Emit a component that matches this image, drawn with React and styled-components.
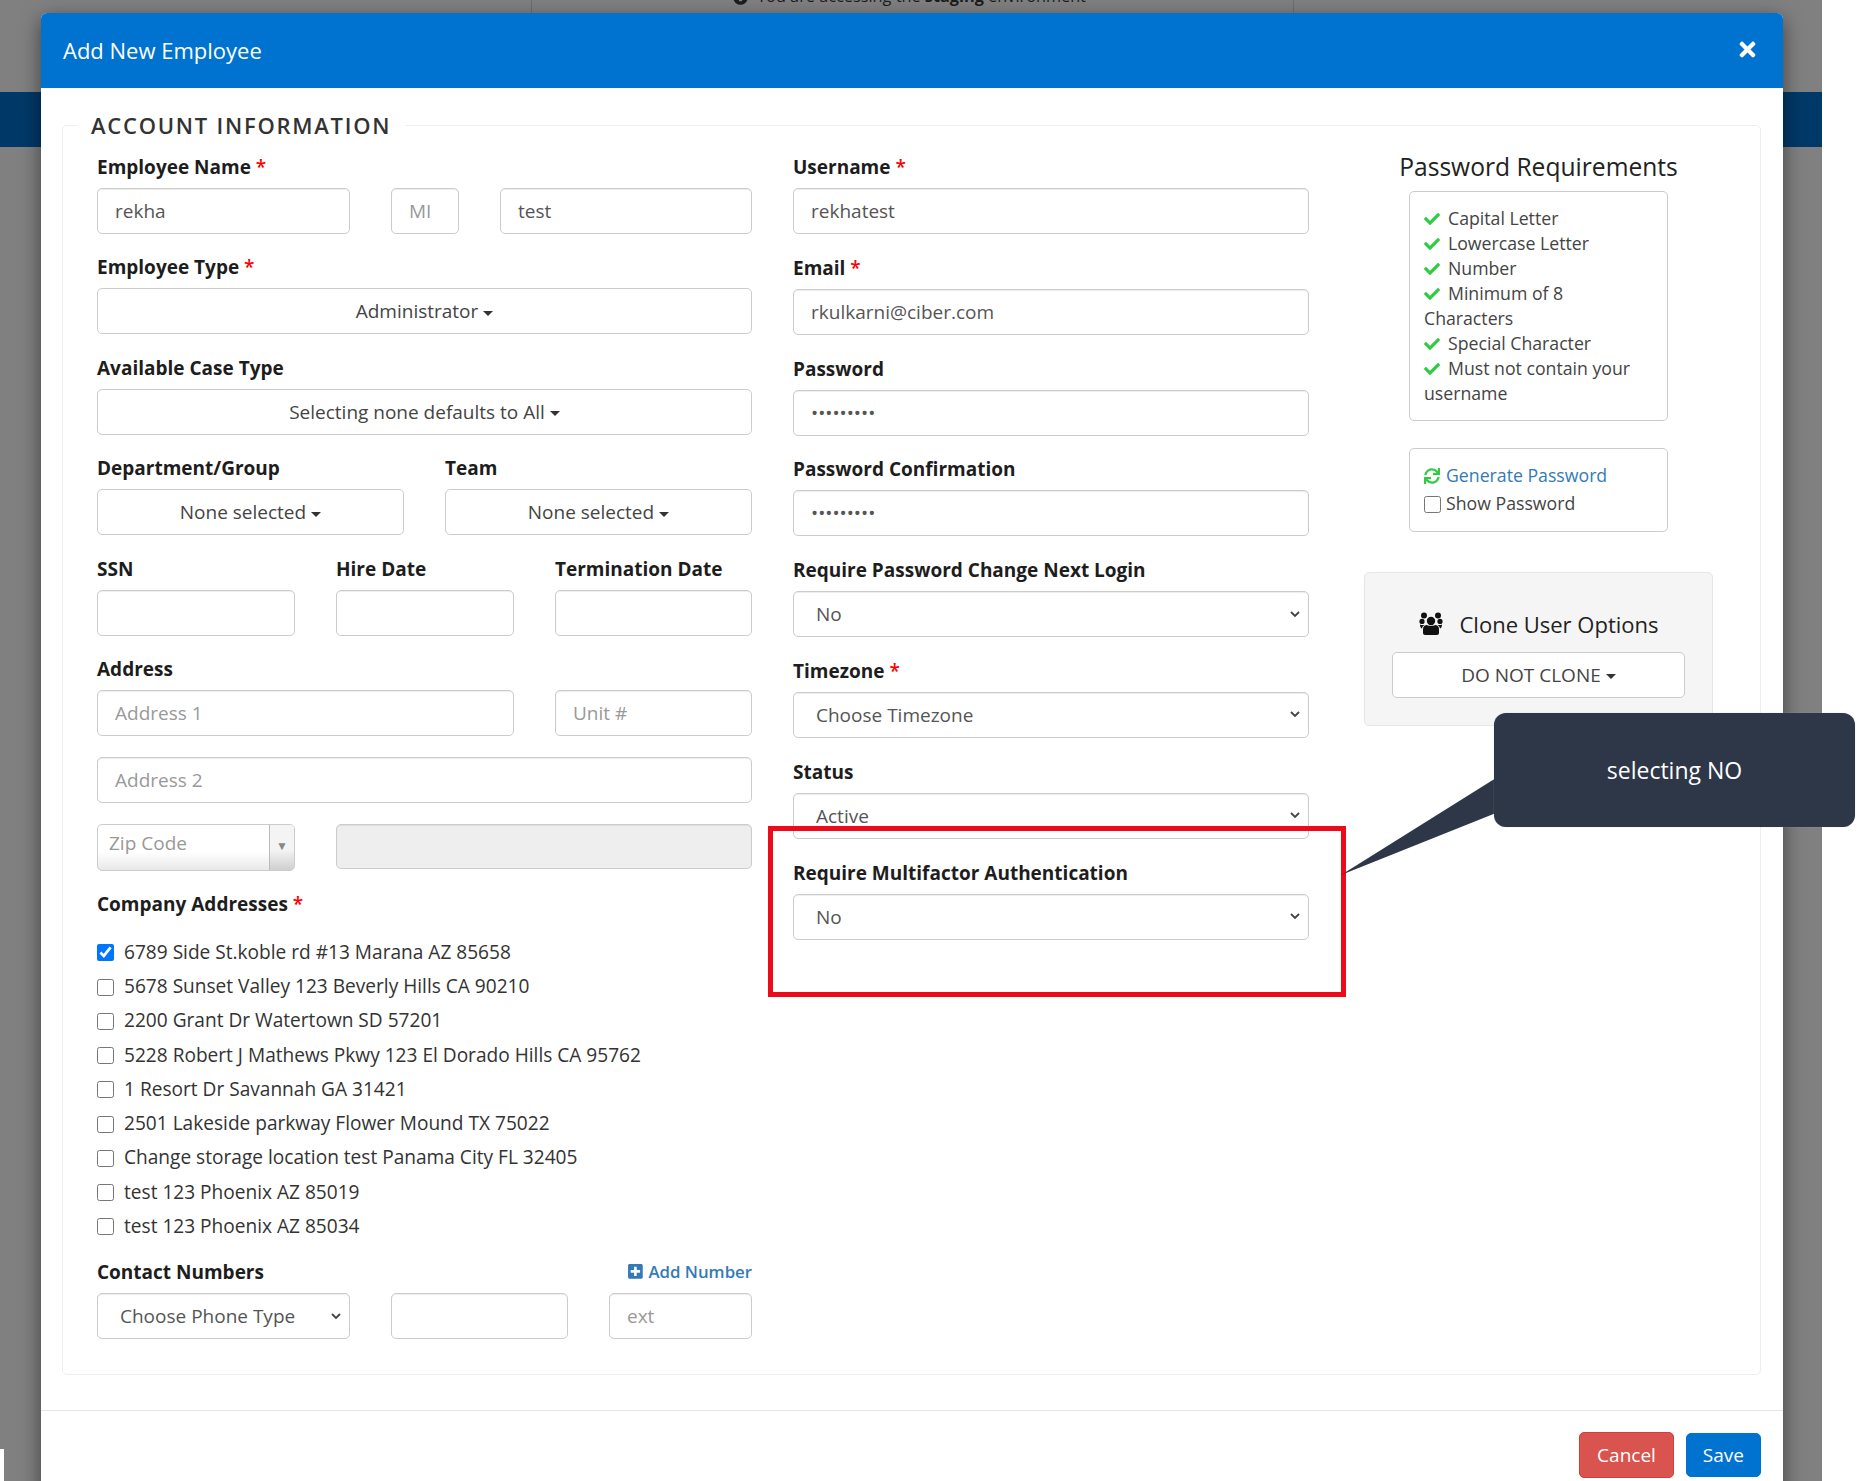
import React from 'react'
import styled, { createGlobalStyle } from 'styled-components'
import { FaTimes, FaCheck, FaSync, FaPlusSquare, FaInfoCircle } from 'react-icons/fa'

const chevron = `url("data:image/svg+xml,%3Csvg xmlns='http://www.w3.org/2000/svg' width='10' height='7'%3E%3Cpath d='M1 1l4 4 4-4' fill='none' stroke='%23444' stroke-width='1.8'/%3E%3C/svg%3E")`

const GlobalStyle = createGlobalStyle`
  html, body {
    margin: 0;
    padding: 0;
    background: #fff;
    overflow: hidden;
  }
  body {
    font-family: "Open Sans", "Liberation Sans", sans-serif;
    font-size: 19px;
    color: #333;
  }
  * {
    box-sizing: border-box;
  }
`

const Page = styled.div`
  position: relative;
  width: 1857px;
  height: 1481px;
  overflow: hidden;
`

const Backdrop = styled.div`
  width: 1822px;
  height: 1481px;
  background: #808080;
`

const Notice = styled.div`
  margin-left: 531px;
  width: 763px;
  height: 13px;
  padding-left: 201px;
  display: flex;
  gap: 9px;
  align-items: flex-end;
  overflow: hidden;
  border-left: 1px solid #6e6e6e;
  border-right: 1px solid #6e6e6e;
  color: #1c1c1c;
  font-size: 16.3px;
  line-height: 25px;
  white-space: nowrap;
  svg {
    flex: none;
    margin-bottom: 8px;
  }
  span {
    margin-bottom: 4px;
  }
`

const NavBand = styled.div`
  height: 55px;
  margin-top: 79px;
  background: #003968;
`

const Corner = styled.div`
  position: absolute;
  left: 0;
  top: 1449px;
  width: 4px;
  height: 32px;
  background: #fff;
`

const Modal = styled.div`
  position: absolute;
  left: 41px;
  top: 13px;
  width: 1742px;
  height: 1500px;
  background: #fff;
  border-radius: 6px;
  box-shadow: 0 6px 20px rgba(0, 0, 0, 0.5);
`

const ModalHeader = styled.div`
  height: 75px;
  padding: 0 22px;
  display: flex;
  align-items: center;
  justify-content: space-between;
  background: #0072d0;
  border-radius: 6px 6px 0 0;
  color: #fff;
`

const ModalTitle = styled.h4`
  margin: 0 0 2px;
  font-size: 22px;
  font-weight: 400;
`

const CloseButton = styled.button`
  display: flex;
  margin: -3px 2px 0 0;
  padding: 0;
  border: 0;
  background: transparent;
  color: #fff;
  font-size: 23px;
`

const ModalBody = styled.div`
  padding: 22px 22px 35px 21px;
  border-bottom: 1px solid #e5e5e5;
`

const Fieldset = styled.fieldset`
  margin: 0;
  padding: 15px 0 35px 34px;
  min-width: 0;
  border: 1px solid #eee;
  border-radius: 5px;
  display: block;
`

const Legend = styled.legend`
  margin-left: -20px;
  padding: 0 14px;
  font-size: 22px;
  font-weight: 600;
  letter-spacing: 1.75px;
  line-height: 30px;
  color: #333;
`

const Columns = styled.div`
  display: grid;
  grid-template-columns: 655px 557px 404px;
  align-items: start;
`

const Column = styled.div`
  margin-left: ${({ $offset }) => $offset || 0}px;
`

const Row = styled.div`
  display: flex;
  gap: 41px;
`

const Group = styled.div`
  width: ${({ $width }) => ($width ? `${$width}px` : '100%')};
  flex: ${({ $width }) => ($width ? 'none' : '1')};
  margin-bottom: 21.4px;
`

const AccountColumn = styled(Column)`
  ${Group} {
    margin-bottom: 21.8px;
  }
`

const Label = styled.label`
  display: block;
  margin-bottom: 8px;
  font-size: 19px;
  font-weight: 700;
  line-height: 25px;
  color: #1d1d1d;
  b {
    font-weight: 600;
    color: #f00;
  }
`

const Input = styled.input`
  display: block;
  width: ${({ $width }) => ($width ? `${$width}px` : '100%')};
  flex: none;
  height: ${({ disabled }) => (disabled ? 45 : 46)}px;
  margin-bottom: ${({ $gap }) => $gap || 0}px;
  padding: 0 17px;
  border: 1px solid #ccc;
  border-radius: 5px;
  background: ${({ disabled }) => (disabled ? '#eee' : '#fff')};
  box-shadow: inset 0 1px 1px rgba(0, 0, 0, 0.075);
  font-family: inherit;
  font-size: 19px;
  color: #555;
  &::placeholder {
    color: #999;
    opacity: 1;
  }
`

const Select = styled.select`
  display: block;
  flex: none;
  width: ${({ $width }) => ($width ? `${$width}px` : '100%')};
  height: 46px;
  padding: 0 22px;
  appearance: none;
  border: 1px solid #ccc;
  border-radius: 5px;
  background: #fff ${chevron} no-repeat right 8px center;
  box-shadow: inset 0 1px 1px rgba(0, 0, 0, 0.075);
  font-family: inherit;
  font-size: 19px;
  color: #555;
`

const Dropdown = styled.button`
  display: block;
  width: 100%;
  height: 46px;
  padding: 0;
  border: 1px solid #ccc;
  border-radius: 5px;
  background: #fff;
  font-family: inherit;
  font-size: 19px;
  color: #444;
`

const Caret = styled.span`
  display: inline-block;
  margin-left: 5px;
  vertical-align: middle;
  border-top: 5px solid #333;
  border-left: 5px solid transparent;
  border-right: 5px solid transparent;
`

const ZipBox = styled.div`
  display: flex;
  width: 198px;
  height: 47px;
  flex: none;
  border: 1px solid #ccc;
  border-radius: 5px;
  overflow: hidden;
  background: linear-gradient(#fff 60%, #e8e8e8);
`

const ZipInput = styled.input`
  width: 171px;
  padding: 0 11px 9px;
  border: 0;
  background: transparent;
  font-family: inherit;
  font-size: 19px;
  &::placeholder {
    color: #999;
    opacity: 1;
  }
`

const ZipArrow = styled.div`
  flex: 1;
  display: flex;
  align-items: center;
  justify-content: center;
  padding-bottom: 4px;
  border-left: 1px solid #bbb;
  background: linear-gradient(#f4f4f4 55%, #cfcfcf);
  font-size: 12px;
  color: #888;
`

const AddressList = styled.div`
  margin: 17.5px 0 17px;
`

const AddressRow = styled.label`
  display: flex;
  align-items: center;
  gap: 10px;
  height: 34.25px;
  font-size: 19.1px;
  color: #333;
`

const Check = styled.input`
  width: 17px;
  height: 17px;
  flex: none;
  margin: 2px 0 0;
`

const ContactHead = styled.div`
  display: flex;
  justify-content: space-between;
  align-items: flex-start;
`

const AddNumber = styled.a`
  display: flex;
  align-items: center;
  gap: 5px;
  margin-top: -1px;
  font-size: 16.8px;
  font-weight: 600;
  line-height: 25px;
  color: #337ab7;
`

const SideTitle = styled.h3`
  margin: -2px 0 10.8px;
  font-size: 24.6px;
  font-weight: 400;
  line-height: 27px;
  text-align: center;
  white-space: nowrap;
  color: #222;
`

const SideBox = styled.div`
  width: 259px;
  margin: 0 auto ${({ $gap }) => $gap}px;
  padding: ${({ $top }) => $top || 14}px 15px 14px 14px;
  border: 1px solid #ccc;
  border-radius: 5px;
  font-size: 17.7px;
  line-height: 25px;
  color: #444;
`

const Requirement = styled.div`
  svg {
    margin-right: 8px;
    font-size: 16px;
    color: #2ecc40;
    vertical-align: -2px;
  }
`

const GenerateLink = styled.a`
  display: flex;
  align-items: center;
  gap: 6px;
  height: 27.5px;
  color: #337ab7;
  svg {
    font-size: 16px;
    color: #2ecc40;
  }
`

const ShowRow = styled.label`
  display: flex;
  align-items: center;
  gap: 5px;
  height: 27.5px;
`

const ClonePanel = styled.div`
  width: 349px;
  padding: 34px 27px 27px;
  border: 1px solid #e6e6e6;
  border-radius: 5px;
  background: #f5f5f5;
`

const CloneTitle = styled.div`
  display: flex;
  align-items: center;
  justify-content: center;
  gap: 17px;
  height: 34px;
  margin-bottom: 11px;
  font-size: 22px;
  color: #222;
  white-space: nowrap;
`

const SideBoxes = styled.div`
  width: 349px;
`

const ModalFooter = styled.div`
  display: flex;
  justify-content: flex-end;
  align-items: center;
  gap: 12px;
  padding: 21px 22px 0 0;
`

const Button = styled.button`
  height: ${({ $danger }) => ($danger ? 46 : 44)}px;
  padding: 0 ${({ $danger }) => ($danger ? 17 : 16)}px;
  border: 1px solid ${({ $danger }) => ($danger ? '#d43f3a' : '#0072d0')};
  border-radius: 5px;
  background: ${({ $danger }) => ($danger ? '#d9534f' : '#0072d0')};
  font-family: inherit;
  font-size: 19px;
  color: #fff;
`

const RedBox = styled.div`
  position: absolute;
  left: 768px;
  top: 826px;
  width: 578px;
  height: 171px;
  border: 5px solid #ed0a1a;
`

const Tail = styled.svg`
  position: absolute;
  left: 1340px;
  top: 770px;
`

const Callout = styled.div`
  position: absolute;
  left: 1494px;
  top: 713px;
  width: 361px;
  height: 114px;
  display: flex;
  align-items: center;
  justify-content: center;
  border-radius: 12px;
  background: #2d3748;
  box-shadow: 0 0 1px #bbb;
  font-size: 23px;
  color: #fff;
`

const addresses = [
  '6789 Side St.koble rd #13 Marana AZ 85658',
  '5678 Sunset Valley 123 Beverly Hills CA 90210',
  '2200 Grant Dr Watertown SD 57201',
  '5228 Robert J Mathews Pkwy 123 El Dorado Hills CA 95762',
  '1 Resort Dr Savannah GA 31421',
  '2501 Lakeside parkway Flower Mound TX 75022',
  'Change storage location test Panama City FL 32405',
  'test 123 Phoenix AZ 85019',
  'test 123 Phoenix AZ 85034',
]

const Required = () => <b>*</b>

const UsersIcon = () => (
  <svg width='24' height='23' viewBox='0 0 24 23' fill='#111'>
    <circle cx='12' cy='9' r='4.2' />
    <circle cx='5' cy='3.400' r='3' />
    <circle cx='19' cy='3.400' r='3' />
    <circle cx='3' cy='9.400' r='2.600' />
    <circle cx='21' cy='9.400' r='2.600' />
    <path d='M4 17c0-2.500 2-4 4-4 1.500 1.200 6.500 1.200 8 0 2 0 4 1.500 4 4v4c0 1.200-1 2-2 2H6c-1 0-2-.8-2-2z' />
    <path d='M1 12.500c1 .7 3 .7 4.500.5-1.500 1-2.300 2-2.500 3.500-1.500-.5-2-2.500-2-4z' />
    <path d='M23 12.500c-1 .7-3 .7-4.500.5 1.500 1 2.300 2 2.500 3.500 1.500-.5 2-2.500 2-4z' />
  </svg>
)

const requirements = [
  'Capital Letter',
  'Lowercase Letter',
  'Number',
  'Minimum of 8 Characters',
  'Special Character',
  'Must not contain your username',
]

const App = () => {
  return (
    <Page>
      <GlobalStyle />
      <Backdrop>
        <Notice>
          <FaInfoCircle size={15} />
          <span>
            You are accessing the <strong>staging</strong> environment
          </span>
        </Notice>
        <NavBand />
      </Backdrop>
      <Corner />

      <Modal>
        <ModalHeader>
          <ModalTitle>Add New Employee</ModalTitle>
          <CloseButton type='button'>
            <FaTimes />
          </CloseButton>
        </ModalHeader>

        <ModalBody>
          <Fieldset>
            <Legend>ACCOUNT INFORMATION</Legend>
            <Columns>
              <Column>
                <Group>
                  <Label>
                    Employee Name <Required />
                  </Label>
                  <Row>
                    <Input $width={253} readOnly value='rekha' />
                    <Input $width={68} placeholder='MI' />
                    <Input $width={252} readOnly value='test' />
                  </Row>
                </Group>
                <Group>
                  <Label>
                    Employee Type <Required />
                  </Label>
                  <Dropdown type='button'>
                    Administrator
                    <Caret />
                  </Dropdown>
                </Group>
                <Group>
                  <Label>Available Case Type</Label>
                  <Dropdown type='button'>
                    Selecting none defaults to All
                    <Caret />
                  </Dropdown>
                </Group>
                <Row>
                  <Group>
                    <Label>Department/Group</Label>
                    <Dropdown type='button'>
                      None selected
                      <Caret />
                    </Dropdown>
                  </Group>
                  <Group>
                    <Label>Team</Label>
                    <Dropdown type='button'>
                      None selected
                      <Caret />
                    </Dropdown>
                  </Group>
                </Row>
                <Row>
                  <Group $width={198}>
                    <Label>SSN</Label>
                    <Input />
                  </Group>
                  <Group $width={178}>
                    <Label>Hire Date</Label>
                    <Input />
                  </Group>
                  <Group $width={197}>
                    <Label>Termination Date</Label>
                    <Input />
                  </Group>
                </Row>
                <Group>
                  <Label>Address</Label>
                  <Row>
                    <Input $width={417} $gap={21} placeholder='Address 1' />
                    <Input $width={197} placeholder='Unit #' />
                  </Row>
                  <Input $gap={21} placeholder='Address 2' />
                  <Row>
                    <ZipBox>
                      <ZipInput placeholder='Zip Code' />
                      <ZipArrow>▼</ZipArrow>
                    </ZipBox>
                    <Input $width={416} disabled />
                  </Row>
                </Group>
                <Label>
                  Company Addresses <Required />
                </Label>
                <AddressList>
                  {addresses.map((address, index) => (
                    <AddressRow key={address}>
                      <Check type='checkbox' readOnly checked={index === 0} />
                      {address}
                    </AddressRow>
                  ))}
                </AddressList>
                <ContactHead>
                  <Label>Contact Numbers</Label>
                  <AddNumber>
                    <FaPlusSquare />
                    Add Number
                  </AddNumber>
                </ContactHead>
                <Row>
                  <Select $width={253} defaultValue='Choose Phone Type'>
                    <option>Choose Phone Type</option>
                  </Select>
                  <Input $width={177} />
                  <Input $width={143} placeholder='ext' />
                </Row>
              </Column>

              <AccountColumn $offset={41}>
                <Group>
                  <Label>
                    Username <Required />
                  </Label>
                  <Input readOnly value='rekhatest' />
                </Group>
                <Group>
                  <Label>
                    Email <Required />
                  </Label>
                  <Input readOnly value='rkulkarni@ciber.com' />
                </Group>
                <Group>
                  <Label>Password</Label>
                  <Input type='password' readOnly value='123456789' />
                </Group>
                <Group>
                  <Label>Password Confirmation</Label>
                  <Input type='password' readOnly value='123456789' />
                </Group>
                <Group>
                  <Label>Require Password Change Next Login</Label>
                  <Select defaultValue='No'>
                    <option>No</option>
                  </Select>
                </Group>
                <Group>
                  <Label>
                    Timezone <Required />
                  </Label>
                  <Select defaultValue='Choose Timezone'>
                    <option>Choose Timezone</option>
                  </Select>
                </Group>
                <Group>
                  <Label>Status</Label>
                  <Select defaultValue='Active'>
                    <option>Active</option>
                  </Select>
                </Group>
                <Group>
                  <Label>Require Multifactor Authentication</Label>
                  <Select defaultValue='No'>
                    <option>No</option>
                  </Select>
                </Group>
              </AccountColumn>

              <Column $offset={55}>
                <SideBoxes>
                  <SideTitle>Password Requirements</SideTitle>
                  <SideBox $gap={27}>
                    {requirements.map((text) => (
                      <Requirement key={text}>
                        <FaCheck />
                        {text}
                      </Requirement>
                    ))}
                  </SideBox>
                  <SideBox $gap={40} $top={13}>
                    <GenerateLink>
                      <FaSync />
                      Generate Password
                    </GenerateLink>
                    <ShowRow>
                      <Check type='checkbox' />
                      Show Password
                    </ShowRow>
                  </SideBox>
                  <ClonePanel>
                    <CloneTitle>
                      <UsersIcon />
                      Clone User Options
                    </CloneTitle>
                    <Dropdown type='button'>
                      DO NOT CLONE
                      <Caret />
                    </Dropdown>
                  </ClonePanel>
                </SideBoxes>
              </Column>
            </Columns>
          </Fieldset>
        </ModalBody>

        <ModalFooter>
          <Button $danger type='button'>
            Cancel
          </Button>
          <Button type='button'>Save</Button>
        </ModalFooter>
      </Modal>

      <RedBox />
      <Tail width='156' height='110' viewBox='0 0 156 110'>
        <polygon points='156,8 1,105 156,43' fill='#2d3748' />
      </Tail>
      <Callout>selecting NO</Callout>
    </Page>
  )
}

export default App
